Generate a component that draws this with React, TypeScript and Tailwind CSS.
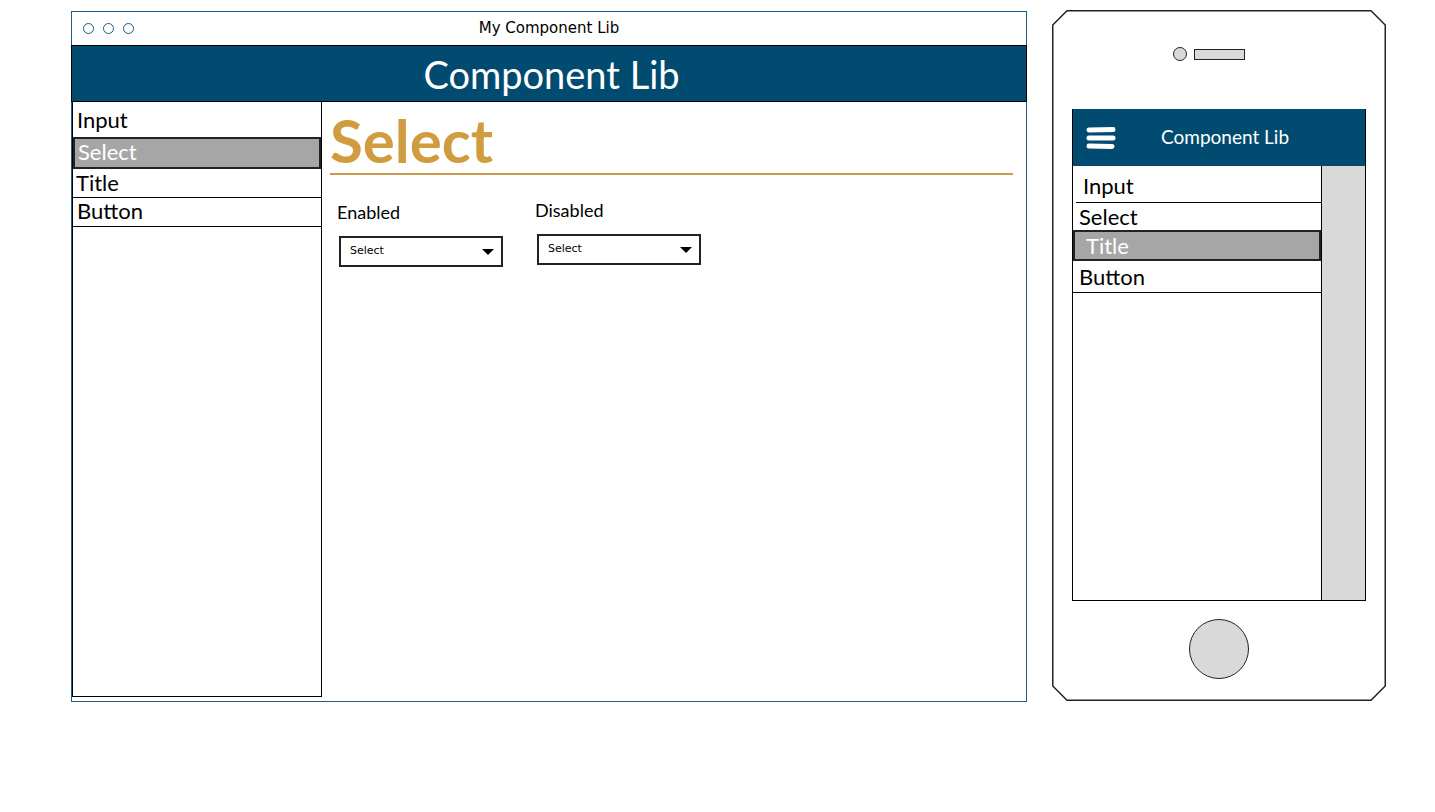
function SelectBox({ className = '' }: { className?: string }) {
  return (
    <div className={`w-[164px] h-[31px] border-2 border-[#222] flex items-center justify-between pl-[9px] pr-[7px] ${className}`}>
      <span className="text-[11px] text-black font-['DejaVu_Sans',sans-serif]">Select</span>
      <span className="w-0 h-0 border-l-[6px] border-r-[6px] border-t-[6px] border-l-transparent border-r-transparent border-t-black mt-[2px]" />
    </div>
  );
}

function BrowserWindow() {
  return (
    <div className="mt-px w-[956px] h-[691px] border border-[#1e5b87] flex flex-col">
      {/* title bar */}
      <div className="h-[33px] grid grid-cols-[1fr_auto_1fr] items-center">
        <div className="flex gap-[9px] pl-[11px]">
          <span className="w-[11px] h-[11px] rounded-full border-[1.5px] border-[#1e5b87]" />
          <span className="w-[11px] h-[11px] rounded-full border-[1.5px] border-[#1e5b87]" />
          <span className="w-[11px] h-[11px] rounded-full border-[1.5px] border-[#1e5b87]" />
        </div>
        <span className="text-[15px] text-black font-['DejaVu_Sans',sans-serif]">My Component Lib</span>
        <div />
      </div>

      {/* header */}
      <div className="h-[57px] bg-[#024b70] border border-black -mx-px flex items-center justify-center">
        <h1 className="text-[38px] text-white leading-none ml-[5px]">Component Lib</h1>
      </div>

      <div className="flex flex-1">
        {/* sidebar */}
        <aside className="w-[250px] mb-[4px] border-[1.5px] border-t-0 border-black flex flex-col pt-[2px]">
          <div className="h-[33px] flex items-center pl-[4px] pb-[3px] text-[22px]">Input</div>
          <div className="h-[32px] flex items-center pl-[3px] pb-[4px] text-[22px] text-white bg-[#a6a6a6] border-2 border-[#222]">Select</div>
          <div className="h-[29px] flex items-center pl-[3px] pb-[2px] text-[22px] border-b-[1.5px] border-black">Title</div>
          <div className="h-[29px] flex items-center pl-[4px] pb-[4px] text-[22px] border-b-[1.5px] border-black">Button</div>
        </aside>

        {/* content */}
        <main className="flex-1 pl-[8px] pr-[13px]">
          <h2 className="text-[60px] font-bold text-[#d09c3f] leading-none pt-[8px] pb-[3px]">Select</h2>
          <div className="h-[1.5px] bg-[#c99a4e]" />
          <div className="flex gap-[32px] pl-[7px] pt-[28px]">
            <div className="flex flex-col gap-[15px]">
              <span className="text-[18px] leading-none">Enabled</span>
              <SelectBox className="ml-[2px]" />
            </div>
            <div className="flex flex-col gap-[15px] -mt-[2px]">
              <span className="text-[18px] leading-none">Disabled</span>
              <SelectBox className="ml-[2px]" />
            </div>
          </div>
        </main>
      </div>
    </div>
  );
}

function Phone() {
  return (
    <div className="relative w-[334px] h-[691px] flex flex-col">
      <svg className="absolute inset-0" width="334" height="691" viewBox="0 0 334 691">
        <polygon
          points="15,0.75 319,0.75 333.25,15 333.25,676 319,690.25 15,690.25 0.75,676 0.75,15"
          fill="white"
          stroke="#222"
          strokeWidth="1.5"
        />
      </svg>

      <div className="relative flex items-center gap-[7px] ml-[121px] mt-[37px]">
        <span className="w-[14px] h-[14px] rounded-full bg-[#d9d9d9] border-[1.5px] border-[#222]" />
        <span className="w-[51px] h-[11px] bg-[#d9d9d9] border-[1.5px] border-[#222]" />
      </div>

      <div className="relative mx-[20px] mt-[48px] h-[492px] border-[1.5px] border-black flex flex-col">
        <div className="h-[57px] bg-[#024b70] flex items-center pl-[13px] -mt-px">
          <svg width="30" height="24" viewBox="0 0 30 24">
            <path d="M3 4 L27 3.5 M3 12 L27 12 M3 20 L26 20.5" stroke="white" strokeWidth="5" strokeLinecap="round" />
          </svg>
          <span className="ml-[45px] text-[19px] text-white">Component Lib</span>
        </div>
        <div className="flex flex-1">
          <div className="w-[249px] bg-white border-r-[1.5px] border-black flex flex-col pt-[2px]">
            <div className="h-[35px] flex items-center pl-[7px] text-[22px] border-b-[1.5px] border-black ml-[3px]">Input</div>
            <div className="h-[27px] flex items-center pl-[6px] text-[22px]">Select</div>
            <div className="h-[31px] flex items-center pl-[11px] text-[22px] text-white bg-[#a6a6a6] border-2 border-[#222]">Title</div>
            <div className="h-[32px] flex items-center pl-[6px] text-[22px] border-b-[1.5px] border-black">Button</div>
          </div>
          <div className="flex-1 bg-[#d9d9d9]" />
        </div>
      </div>

      <div className="relative self-center mt-[18px] w-[60px] h-[60px] rounded-full bg-[#d9d9d9] border-[1.5px] border-[#222]" />
    </div>
  );
}

export default function App() {
  return (
    <div className="min-h-screen bg-white text-black font-['Lato',sans-serif] flex items-start gap-[25px] pl-[71px] pt-[10px]">
      <BrowserWindow />
      <Phone />
    </div>
  );
}
